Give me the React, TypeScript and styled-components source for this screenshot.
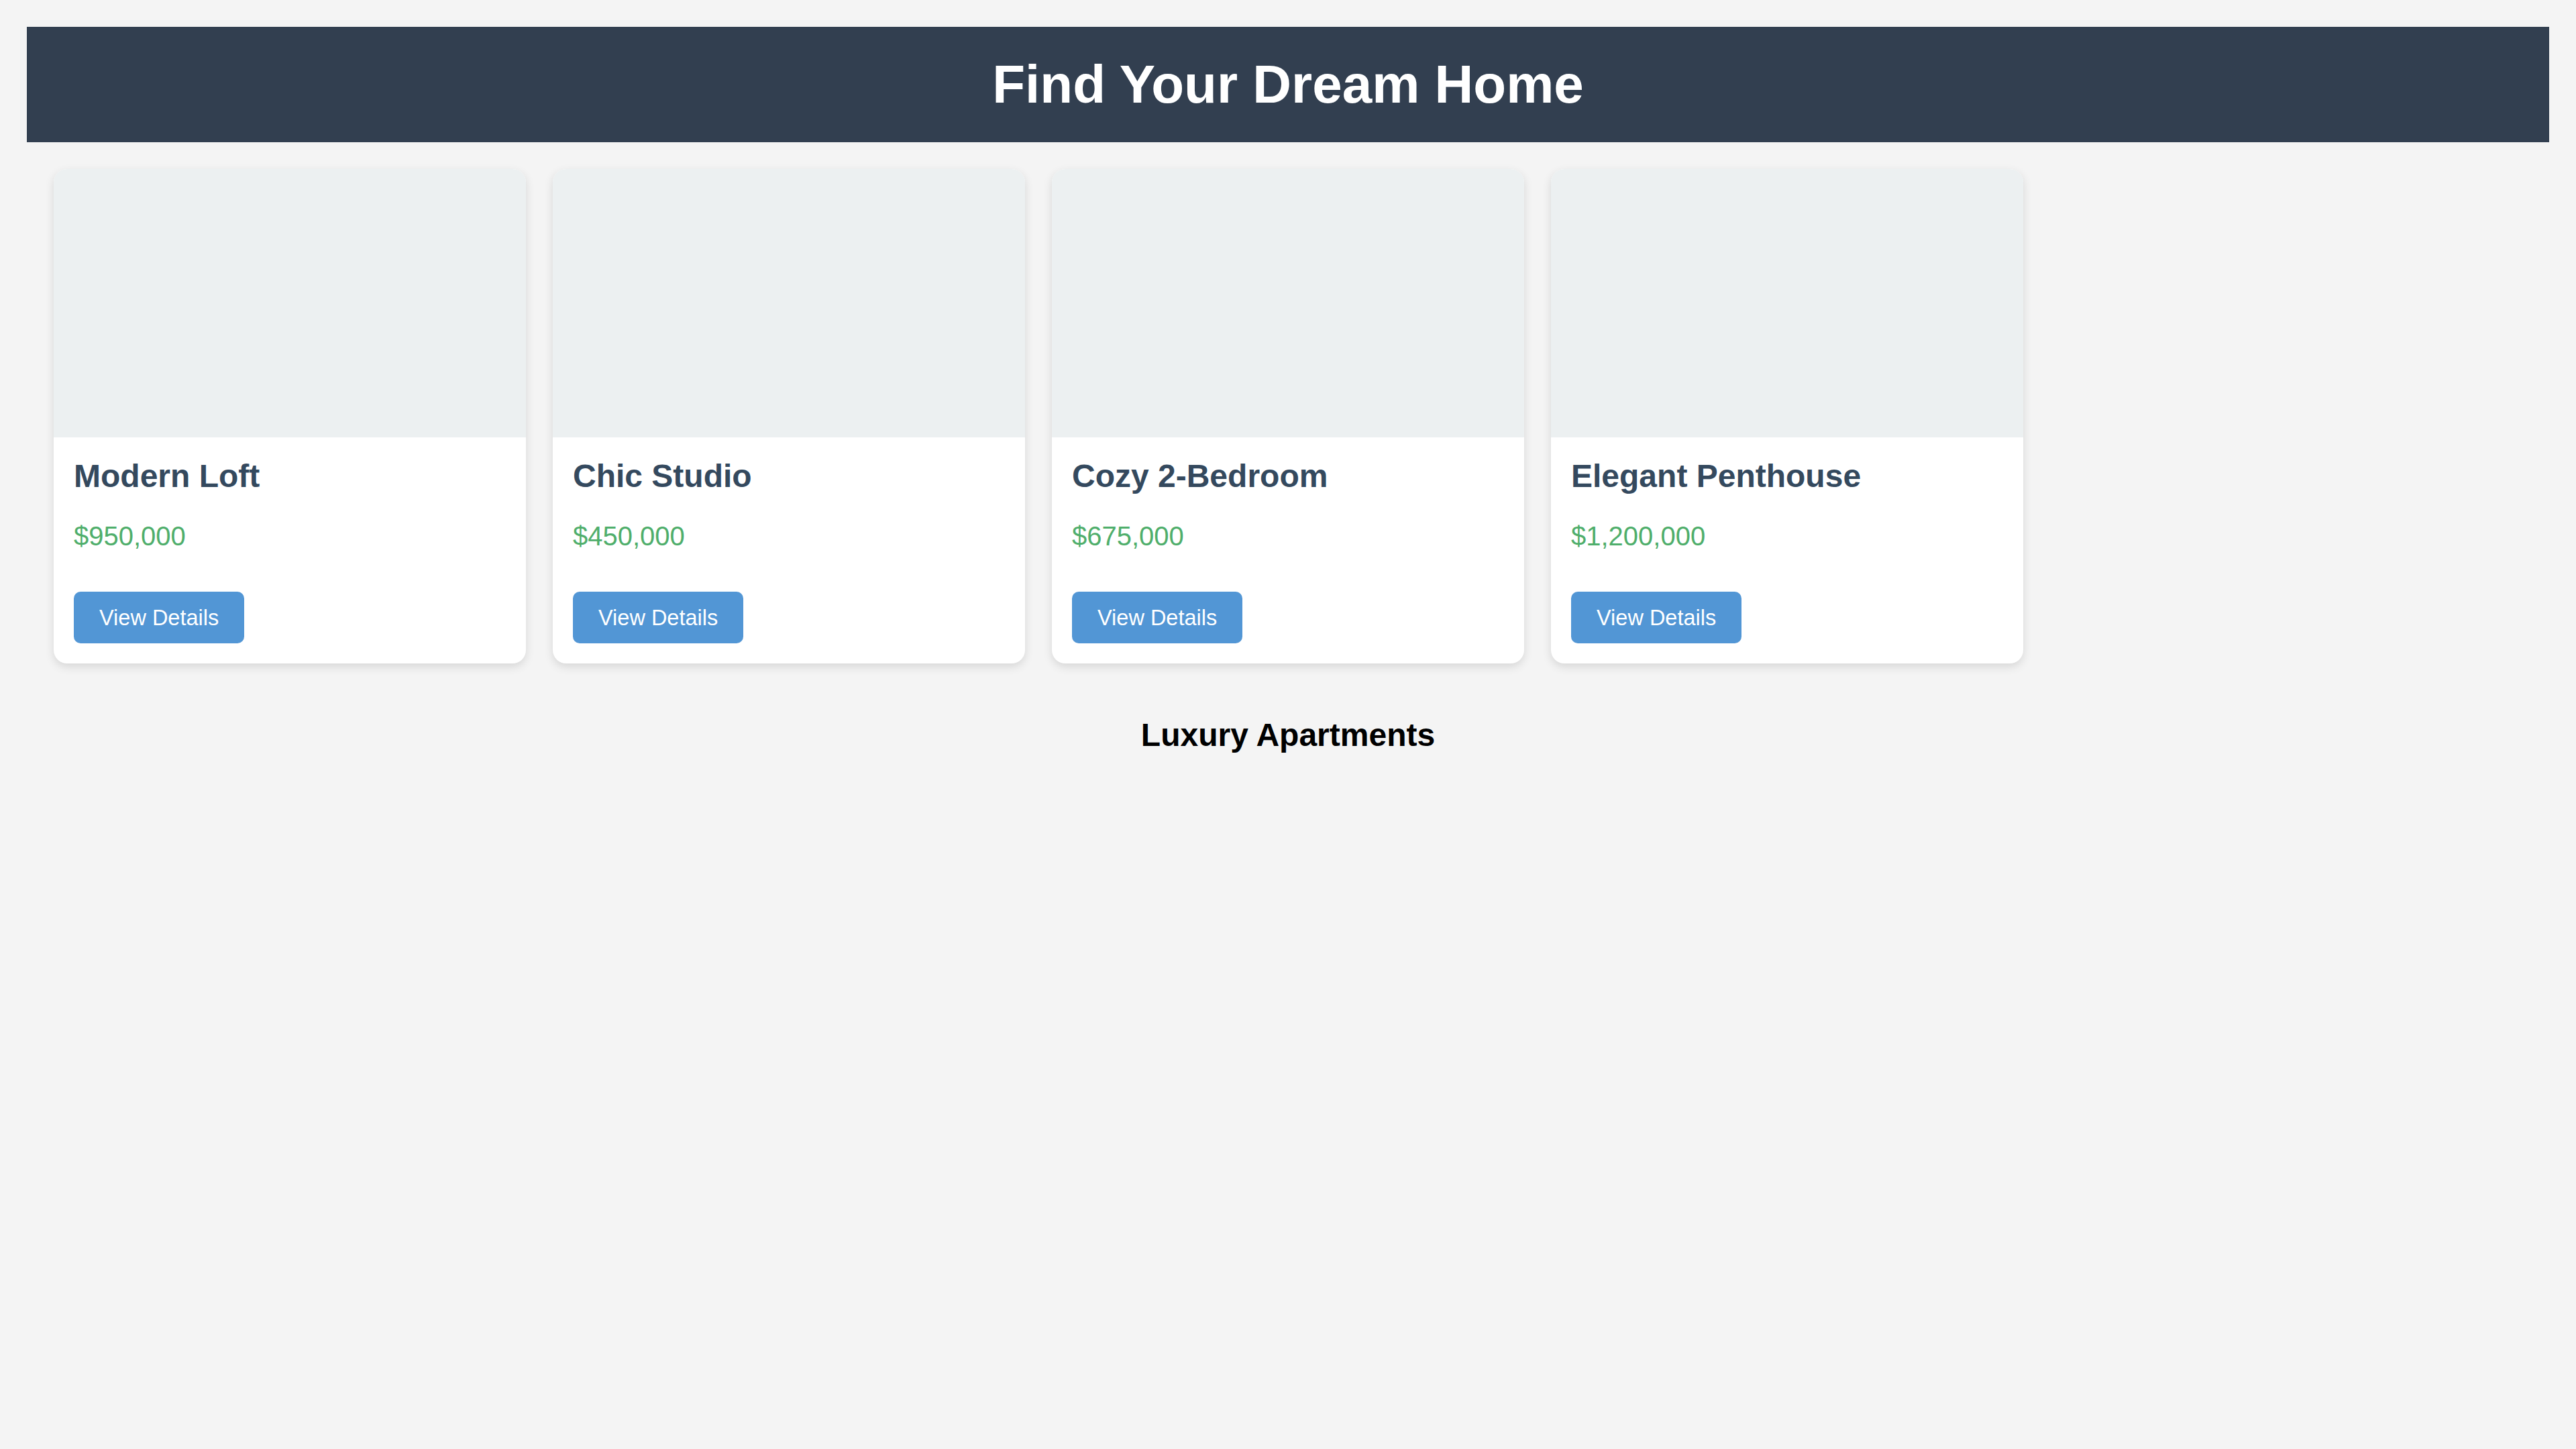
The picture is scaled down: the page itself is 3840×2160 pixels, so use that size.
import React from "react";
import styled, { createGlobalStyle } from "styled-components";

const GlobalStyle = createGlobalStyle`
  html, body {
    margin: 0;
    padding: 0;
    background: #f4f4f4;
    font-family: "Liberation Sans", Arial, Helvetica, sans-serif;
  }
  * { box-sizing: border-box; }
`;

const Page = styled.div`
  padding: 40px;
  min-height: 2160px;
`;

const Header = styled.header`
  background: #323f50;
  padding: 40px;
  text-align: center;
`;

const HeaderTitle = styled.h1`
  margin: 0;
  color: #ffffff;
  font-size: 80px;
  font-weight: 700;
  line-height: 92px;
`;

const Grid = styled.section`
  display: grid;
  grid-template-columns: repeat(5, 1fr);
  gap: 40px;
  padding: 0 40px;
  margin-top: 40px;
`;

const Card = styled.article`
  background: #ffffff;
  border-radius: 20px;
  overflow: hidden;
  box-shadow: 0 5px 14px rgba(0, 0, 0, 0.12);
`;

const CardImage = styled.div`
  height: 400px;
  background: #ecf0f1;
`;

const CardBody = styled.div`
  padding: 30px;
`;

const CardTitle = styled.h3`
  margin: 0 0 39px;
  color: #34495e;
  font-size: 48px;
  font-weight: 700;
  line-height: 55px;
`;

const Price = styled.p`
  margin: 0 0 60px;
  color: #4fae6b;
  font-size: 40px;
  line-height: 46px;
`;

const Button = styled.button`
  display: inline-block;
  background: #5296d5;
  color: #ffffff;
  border: none;
  border-radius: 10px;
  font-family: "Liberation Sans", Arial, sans-serif;
  font-size: 32.5px;
  line-height: 38px;
  height: 77px;
  padding: 0 38px;
  cursor: pointer;
`;

const SectionTitle = styled.h3`
  margin: 80px 0 0;
  text-align: center;
  color: #000000;
  font-size: 48px;
  font-weight: 700;
  line-height: 54px;
`;

const listings = [
  { title: "Modern Loft", price: "$950,000" },
  { title: "Chic Studio", price: "$450,000" },
  { title: "Cozy 2-Bedroom", price: "$675,000" },
  { title: "Elegant Penthouse", price: "$1,200,000" },
];

export default function App() {
  return (
    <>
      <GlobalStyle />
      <Page>
        <Header>
          <HeaderTitle>Find Your Dream Home</HeaderTitle>
        </Header>
        <Grid>
          {listings.map((l) => (
            <Card key={l.title}>
              <CardImage />
              <CardBody>
                <CardTitle>{l.title}</CardTitle>
                <Price>{l.price}</Price>
                <Button>View Details</Button>
              </CardBody>
            </Card>
          ))}
        </Grid>
        <SectionTitle>Luxury Apartments</SectionTitle>
      </Page>
    </>
  );
}
